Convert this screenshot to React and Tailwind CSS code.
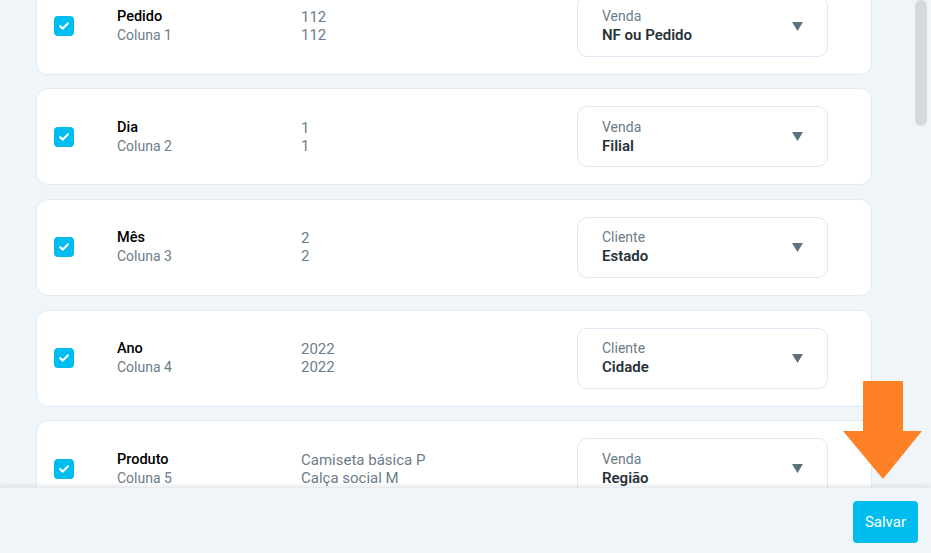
import React from 'react';

const rows = [
  { name: 'Pedido', col: 'Coluna 1', values: ['112', '112'], group: 'Venda', field: 'NF ou Pedido' },
  { name: 'Dia', col: 'Coluna 2', values: ['1', '1'], group: 'Venda', field: 'Filial' },
  { name: 'Mês', col: 'Coluna 3', values: ['2', '2'], group: 'Cliente', field: 'Estado' },
  { name: 'Ano', col: 'Coluna 4', values: ['2022', '2022'], group: 'Cliente', field: 'Cidade' },
  { name: 'Produto', col: 'Coluna 5', values: ['Camiseta básica P', 'Calça social M'], group: 'Venda', field: 'Região' },
];

function Checkbox() {
  return (
    <div className="w-5 h-5 shrink-0 rounded-[4px] bg-[#00bdf0] flex items-center justify-center">
      <svg width="12" height="12" viewBox="0 0 12 12">
        <path d="M2.2 6.2 L4.8 8.6 L9.8 3.4" fill="none" stroke="white" strokeWidth="2.2" strokeLinecap="round" strokeLinejoin="round" />
      </svg>
    </div>
  );
}

function Row({ row }) {
  return (
    <div className="h-[97px] shrink-0 bg-white border border-[#e1ebf5] rounded-[12px] flex items-center pl-[17px] pr-[43px]">
      <Checkbox />
      <div className="ml-[43px] w-[184px] flex flex-col leading-[19px]">
        <span className="text-[14.5px] font-medium text-black">{row.name}</span>
        <span className="text-[14px] text-[#6b7c8a]">{row.col}</span>
      </div>
      <div className="flex-1 flex flex-col text-[15px] text-[#6b7c8a] leading-[18px]">
        {row.values.map((v, i) => <span key={i}>{v}</span>)}
      </div>
      <div className="w-[251px] h-[61px] border border-[#dce9f5] rounded-[10px] flex items-center pl-[24px] pr-[24px]">
        <div className="flex-1 flex flex-col leading-[19px]">
          <span className="text-[14px] text-[#6b7c8a]">{row.group}</span>
          <span className="text-[15px] font-semibold text-[#263238]">{row.field}</span>
        </div>
        <svg width="11" height="9" viewBox="0 0 11 9"><path d="M0 0 H11 L5.5 9 Z" fill="#5d717e" /></svg>
      </div>
    </div>
  );
}

export default function App() {
  return (
    <div className="relative w-[931px] h-[553px] overflow-hidden bg-[#f0f5fa] flex flex-col" style={{ fontFamily: 'Roboto, "Noto Sans", sans-serif' }}>
      <div className="flex-1 flex min-h-0">
        <div className="flex-1 overflow-hidden pl-[36px] pr-[42px]">
          <div className="-mt-[22.5px] flex flex-col gap-[13.7px]">
            {rows.map((r) => <Row key={r.name} row={r} />)}
          </div>
        </div>
        <div className="w-[17px] shrink-0 pl-[1px]">
          <div className="w-[12px] h-[126px] rounded-full bg-[#d5d9de]" />
        </div>
      </div>
      <div className="h-[66px] shrink-0 bg-[#f0f5fa] shadow-[0_-2px_4px_rgba(0,0,0,0.08)] border-t border-[#e4ebf2] flex items-start justify-end pt-[13px] pr-[13px] z-10">
        <button className="h-[42px] px-[12px] rounded-[4px] bg-[#00bdf0] text-white text-[15px]">Salvar</button>
      </div>
      <svg className="absolute left-[843px] top-[381px] z-20" width="80" height="98" viewBox="0 0 80 98">
        <path d="M20 0 H60 V50 H79 L40 98 L0 50 H20 Z" fill="#ff8126" />
      </svg>
    </div>
  );
}
